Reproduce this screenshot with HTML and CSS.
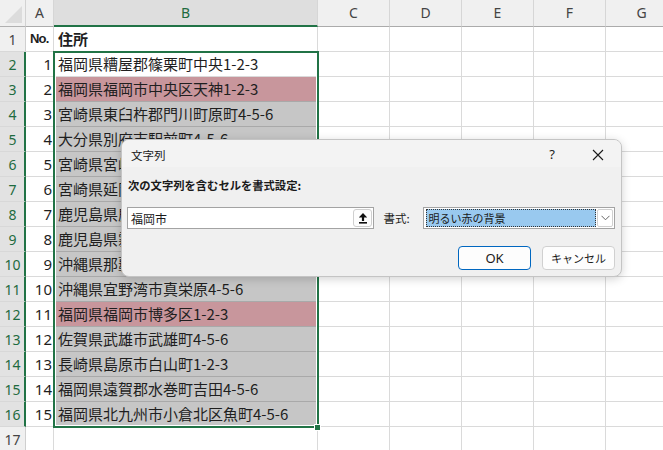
FILE: index.html
```html
<!DOCTYPE html>
<html lang="ja">
<head>
<meta charset="utf-8">
<title>Excel</title>
<link rel="stylesheet" href="styles.css">
</head>
<body>
<div class="app">
  <div class="sheet">
    <div class="corner"><span class="tri"></span></div>
    <div class="ch">A</div><div class="ch sel">B</div><div class="ch">C</div><div class="ch">D</div><div class="ch">E</div><div class="ch">F</div><div class="ch">G</div>

    <div class="rh">1</div><div class="c hd no">No.</div><div class="c hd addr">住所</div><div class="c"></div><div class="c"></div><div class="c"></div><div class="c"></div><div class="c"></div>

    <div class="rh sel">2</div><div class="c num">1</div><div class="c addr w">福岡県糟屋郡篠栗町中央1-2-3</div><div class="c"></div><div class="c"></div><div class="c"></div><div class="c"></div><div class="c"></div>
    <div class="rh sel">3</div><div class="c num">2</div><div class="c addr p">福岡県福岡市中央区天神1-2-3</div><div class="c"></div><div class="c"></div><div class="c"></div><div class="c"></div><div class="c"></div>
    <div class="rh sel">4</div><div class="c num">3</div><div class="c addr g">宮崎県東臼杵郡門川町原町4-5-6</div><div class="c"></div><div class="c"></div><div class="c"></div><div class="c"></div><div class="c"></div>
    <div class="rh sel">5</div><div class="c num">4</div><div class="c addr g">大分県別府市駅前町4-5-6</div><div class="c"></div><div class="c"></div><div class="c"></div><div class="c"></div><div class="c"></div>
    <div class="rh sel">6</div><div class="c num">5</div><div class="c addr g">宮崎県宮崎</div><div class="c"></div><div class="c"></div><div class="c"></div><div class="c"></div><div class="c"></div>
    <div class="rh sel">7</div><div class="c num">6</div><div class="c addr g">宮崎県延岡</div><div class="c"></div><div class="c"></div><div class="c"></div><div class="c"></div><div class="c"></div>
    <div class="rh sel">8</div><div class="c num">7</div><div class="c addr g">鹿児島県鹿</div><div class="c"></div><div class="c"></div><div class="c"></div><div class="c"></div><div class="c"></div>
    <div class="rh sel">9</div><div class="c num">8</div><div class="c addr g">鹿児島県霧</div><div class="c"></div><div class="c"></div><div class="c"></div><div class="c"></div><div class="c"></div>
    <div class="rh sel">10</div><div class="c num">9</div><div class="c addr g">沖縄県那覇</div><div class="c"></div><div class="c"></div><div class="c"></div><div class="c"></div><div class="c"></div>
    <div class="rh sel">11</div><div class="c num">10</div><div class="c addr g">沖縄県宜野湾市真栄原4-5-6</div><div class="c"></div><div class="c"></div><div class="c"></div><div class="c"></div><div class="c"></div>
    <div class="rh sel">12</div><div class="c num">11</div><div class="c addr p">福岡県福岡市博多区1-2-3</div><div class="c"></div><div class="c"></div><div class="c"></div><div class="c"></div><div class="c"></div>
    <div class="rh sel">13</div><div class="c num">12</div><div class="c addr g">佐賀県武雄市武雄町4-5-6</div><div class="c"></div><div class="c"></div><div class="c"></div><div class="c"></div><div class="c"></div>
    <div class="rh sel">14</div><div class="c num">13</div><div class="c addr g">長崎県島原市白山町1-2-3</div><div class="c"></div><div class="c"></div><div class="c"></div><div class="c"></div><div class="c"></div>
    <div class="rh sel">15</div><div class="c num">14</div><div class="c addr g">福岡県遠賀郡水巻町吉田4-5-6</div><div class="c"></div><div class="c"></div><div class="c"></div><div class="c"></div><div class="c"></div>
    <div class="rh sel">16</div><div class="c num">15</div><div class="c addr g last">福岡県北九州市小倉北区魚町4-5-6</div><div class="c"></div><div class="c"></div><div class="c"></div><div class="c"></div><div class="c"></div>
    <div class="rh">17</div><div class="c"></div><div class="c"></div><div class="c"></div><div class="c"></div><div class="c"></div><div class="c"></div><div class="c"></div>
  </div>

  <div class="selection"></div>
  <div class="handle"></div>

  <div class="dialog">
    <div class="titlebar">
      <span class="title">文字列</span>
      <span class="tbtn help">?</span>
      <span class="tbtn close">
        <svg width="12" height="12" viewBox="0 0 12 12"><path d="M1 1 L11 11 M11 1 L1 11" stroke="#1a1a1a" stroke-width="1.1" fill="none"/></svg>
      </span>
    </div>
    <div class="dbody">
      <div class="prompt">次の文字列を含むセルを書式設定:</div>
      <div class="fieldrow">
        <div class="textbox">
          <span class="tbval">福岡市</span>
          <span class="refbtn">
            <svg width="10" height="12" viewBox="0 0 10 12"><polygon points="5,1 0.8,5.6 9.2,5.6" fill="#111"/><rect x="3.9" y="5" width="2.2" height="4" fill="#111"/><rect x="1" y="10" width="8" height="1.6" fill="#111"/></svg>
          </span>
        </div>
        <span class="fmtlabel">書式:</span>
        <div class="combo">
          <span class="combosel">明るい赤の背景</span>
          <span class="combobtn">
            <svg width="9" height="6" viewBox="0 0 9 6"><path d="M0.5 0.8 L4.5 4.8 L8.5 0.8" stroke="#666" stroke-width="1" fill="none"/></svg>
          </span>
        </div>
      </div>
      <div class="btnrow">
        <span class="btn ok">OK</span>
        <span class="btn">キャンセル</span>
      </div>
    </div>
  </div>
</div>
</body>
</html>
```

FILE: styles.css
```css
html, body {
  margin: 0;
  padding: 0;
  background: #ffffff;
  overflow: hidden;
}

.app {
  position: relative;
  width: 663px;
  height: 450px;
  overflow: hidden;
  font-family: "Noto Sans CJK JP", "Noto Sans", sans-serif;
  color: #1f1f1f;
}

.sheet {
  display: grid;
  grid-template-columns: 26px 28px 264px 72px 72px 72px 72px 72px;
  grid-template-rows: 27px;
  grid-auto-rows: 25px;
  width: 678px;
}

.sheet > div {
  box-sizing: border-box;
}

.corner {
  background: #f0f0f0;
  border-right: 1px solid #d2d2d2;
  border-bottom: 1px solid #b0b0b0;
  position: relative;
}

.tri {
  position: absolute;
  right: 3px;
  bottom: 3px;
  width: 0;
  height: 0;
  border-left: 17px solid transparent;
  border-bottom: 17px solid #dcdcdc;
}

.ch {
  background: #f0f0f0;
  border-right: 1px solid #d6d6d6;
  border-bottom: 1px solid #ababab;
  font-family: "Noto Sans", sans-serif;
  font-size: 14px;
  color: #444;
  display: flex;
  align-items: center;
  justify-content: center;
  padding-bottom: 1px;
}

.ch.sel {
  background: #dedede;
  color: #1e6b40;
  border-bottom: 2px solid #217346;
}

.rh {
  background: #f0f0f0;
  border-right: 1px solid #cfcfcf;
  border-bottom: 1px solid #d8d8d8;
  font-family: "Noto Sans", sans-serif;
  font-size: 14px;
  color: #444;
  display: flex;
  align-items: center;
  justify-content: center;
}

.rh.sel {
  background: #e2e2e2;
  color: #1e6b40;
  border-right: 2px solid #217346;
  padding-left: 1px;
}

.c {
  border-right: 1px solid #dadada;
  border-bottom: 1px solid #dadada;
  font-size: 15px;
  line-height: 24px;
  white-space: nowrap;
  overflow: hidden;
  color: #1f1f1f;
}

.num {
  text-align: right;
  padding-right: 1px;
  font-family: "Noto Sans", sans-serif;
}

.addr {
  padding-left: 4px;
}

.hd {
  font-weight: 700;
}

.no {
  font-family: "Liberation Sans Narrow", "Liberation Sans", sans-serif;
  font-size: 13px;
  letter-spacing: -0.8px;
  padding-left: 4px;
}

.g {
  background: #c6c6c6;
  border-bottom-color: #a9a9a9;
}

.p {
  background: #c8969c;
  border-bottom-color: #a9a9a9;
}

.selection {
  position: absolute;
  left: 53px;
  top: 51px;
  width: 266px;
  height: 377px;
  box-sizing: border-box;
  border: 2px solid #217346;
  box-shadow: inset 0 0 0 1px #ffffff;
  pointer-events: none;
}

.handle {
  position: absolute;
  left: 314px;
  top: 424px;
  width: 7px;
  height: 7px;
  box-sizing: border-box;
  background: #217346;
  border: 1px solid #ffffff;
}

/* dialog */
.dialog {
  position: absolute;
  left: 121px;
  top: 139px;
  width: 501px;
  height: 138px;
  box-sizing: border-box;
  background: #f0f0f0;
  border: 1px solid #c4c4c4;
  border-radius: 8px;
  box-shadow: 0 2px 10px rgba(0, 0, 0, 0.18);
  overflow: hidden;
  display: flex;
  flex-direction: column;
  font-size: 12px;
  color: #1a1a1a;
}

.titlebar {
  height: 27px;
  background: #f3f3f3;
  display: flex;
  align-items: center;
  flex: none;
}

.title {
  flex: 1;
  padding-left: 9px;
  font-size: 11.5px;
  padding-top: 2px;
}

.tbtn {
  width: 46px;
  height: 27px;
  display: flex;
  align-items: center;
  justify-content: center;
}

.help {
  font-family: "Noto Sans", sans-serif;
  font-size: 13px;
  padding-top: 1px;
}

.close {
  padding-top: 2px;
}

.dbody {
  flex: 1;
  padding: 0 6px 0 5px;
  display: flex;
  flex-direction: column;
}

.prompt {
  font-weight: 700;
  font-size: 11.3px;
  line-height: 16px;
  margin-top: 10px;
  padding-left: 1px;
}

.fieldrow {
  display: flex;
  align-items: center;
  margin-top: 14px;
  height: 22px;
}

.textbox {
  width: 248px;
  height: 22px;
  box-sizing: border-box;
  background: #ffffff;
  border: 1px solid #a3a3a3;
  display: flex;
  align-items: center;
  justify-content: space-between;
  padding-left: 3px;
  padding-right: 1px;
}

.tbval {
  font-size: 12px;
}

.refbtn {
  width: 19px;
  height: 18px;
  box-sizing: border-box;
  border: 1px solid #cfcfcf;
  border-radius: 3px;
  background: #fdfdfd;
  display: flex;
  align-items: center;
  justify-content: center;
}

.fmtlabel {
  width: 40px;
  margin-left: 9px;
  font-size: 11.5px;
}

.combo {
  width: 192px;
  height: 22px;
  box-sizing: border-box;
  border: 1px solid #a3a3a3;
  background: #ffffff;
  display: flex;
  align-items: center;
  padding: 1px 1px 1px 2px;
}

.combosel {
  flex: 1;
  height: 18px;
  box-sizing: border-box;
  background: #99c9ef;
  border: 1px dotted #333;
  font-size: 11px;
  line-height: 16px;
  padding-left: 1px;
}

.combobtn {
  width: 16px;
  height: 18px;
  box-sizing: border-box;
  margin-left: 1px;
  border: 1px solid #d0d0d0;
  border-radius: 2px;
  background: #ffffff;
  display: flex;
  align-items: center;
  justify-content: center;
}

.btnrow {
  display: flex;
  justify-content: flex-end;
  gap: 11px;
  margin-top: 17px;
}

.btn {
  width: 73px;
  height: 24px;
  box-sizing: border-box;
  border: 1px solid #d0d0d0;
  border-radius: 4px;
  background: #fdfdfd;
  display: flex;
  align-items: center;
  justify-content: center;
  font-size: 11px;
}

.btn.ok {
  border: 1px solid #0067c0;
  font-family: "Noto Sans", sans-serif;
  font-size: 13px;
}
```
